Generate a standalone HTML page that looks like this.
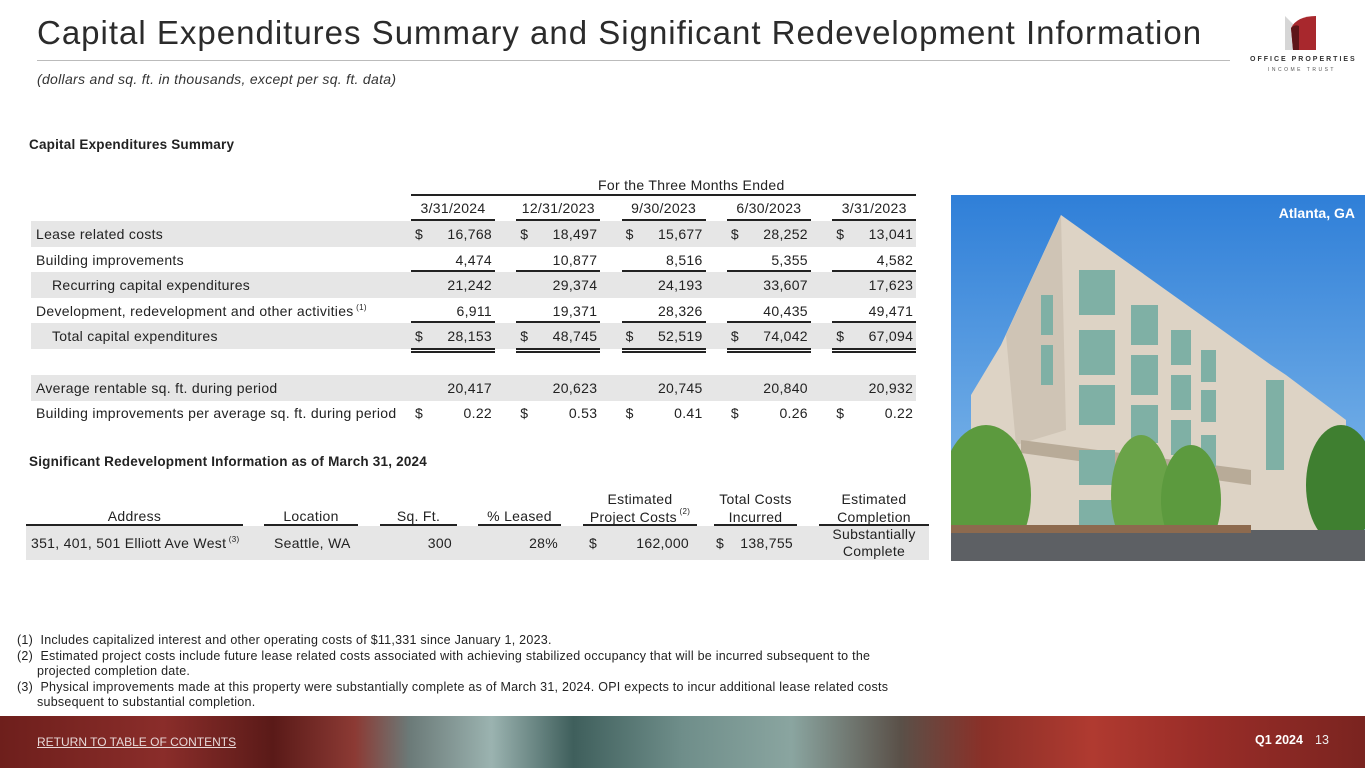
<!DOCTYPE html>
<html><head><meta charset="utf-8"><style>
*{margin:0;padding:0;box-sizing:border-box}
body{width:1365px;height:768px;overflow:hidden;background:#fff;font-family:"Liberation Sans",sans-serif;color:#222;position:relative;font-size:13px}
.a{position:absolute;white-space:nowrap}
.r{text-align:right}
.g{position:absolute;background:#e6e6e6}
.l{position:absolute;height:1.5px;background:#222}
sup{font-size:8px;vertical-align:6px}
.t{font-size:14px;letter-spacing:0.3px}
</style></head><body>
<div class="a" style="left:37px;top:14px;font-size:33px;color:#2b2b2b;letter-spacing:1px">Capital Expenditures Summary and Significant Redevelopment Information</div>
<div class="a" style="left:37px;top:60px;width:1193px;height:1px;background:#bbb"></div>
<div class="a" style="left:37px;top:71px;font-size:14px;font-style:italic;color:#333;letter-spacing:0.3px">(dollars and sq. ft. in thousands, except per sq. ft. data)</div>
<!-- logo -->
<svg class="a" style="left:1283px;top:14px" width="34" height="36" viewBox="0 0 34 36"><path d="M2 2 L14 14 L14 36 L2 36Z" fill="#d6d6d6"/><path d="M8 14 Q14 2 33 2 L33 36 L10 36Z" fill="#a8282d"/><path d="M8 14 Q12 10 16 12 L16 36 L10 36Z" fill="#5e1518"/></svg>
<div class="a" style="left:1250px;top:56px;font-size:7px;letter-spacing:2px;font-weight:bold;color:#333">OFFICE PROPERTIES</div>
<div class="a" style="left:1268px;top:67px;font-size:5px;letter-spacing:2.5px;color:#555">INCOME TRUST</div>

<div class="a" style="left:29px;top:137px;font-weight:bold;font-size:13.5px;letter-spacing:0.2px">Capital Expenditures Summary</div>
<div class="a t" style="left:598px;top:177px">For the Three Months Ended</div>
<div class="l" style="left:411px;top:194px;width:505px"></div>

<div class="g" style="left:31px;top:221px;width:885px;height:26px"></div>
<div class="g" style="left:31px;top:272px;width:885px;height:26px"></div>
<div class="g" style="left:31px;top:323px;width:885px;height:26px"></div>
<div class="g" style="left:31px;top:375px;width:885px;height:26px"></div>

<div style="position:absolute;left:0;top:0" class="t">
<div class="a" style="left:36px;top:226px">Lease related costs</div>
<div class="a" style="left:36px;top:252px">Building improvements</div>
<div class="a" style="left:52px;top:277px">Recurring capital expenditures</div>
<div class="a" style="left:36px;top:303px">Development, redevelopment and other activities<sup> (1)</sup></div>
<div class="a" style="left:52px;top:328px">Total capital expenditures</div>
<div class="a" style="left:36px;top:380px">Average rentable sq. ft. during period</div>
<div class="a" style="left:36px;top:405px">Building improvements per average sq. ft. during period</div>
</div>

<div id="cols"></div>
<script>
var cols=[["3/31/2024","16,768","4,474","21,242","6,911","28,153","20,417","0.22"],
["12/31/2023","18,497","10,877","29,374","19,371","48,745","20,623","0.53"],
["9/30/2023","15,677","8,516","24,193","28,326","52,519","20,745","0.41"],
["6/30/2023","28,252","5,355","33,607","40,435","74,042","20,840","0.26"],
["3/31/2023","13,041","4,582","17,623","49,471","67,094","20,932","0.22"]];
var tops=[226,252,277,303,328,380,405],dol=[1,0,0,0,1,0,1],h="";
cols.forEach(function(c,i){var x=411+i*105.3;
h+='<div class="a t" style="left:'+x+'px;top:200px;width:84px;text-align:center">'+c[0]+'</div>';
h+='<div class="l" style="left:'+x+'px;top:219px;width:84px"></div>';
h+='<div class="l" style="left:'+x+'px;top:270px;width:84px"></div>';
h+='<div class="l" style="left:'+x+'px;top:321px;width:84px"></div>';
h+='<div class="l" style="left:'+x+'px;top:348px;width:84px"></div>';
h+='<div class="l" style="left:'+x+'px;top:351px;width:84px"></div>';
for(var k=0;k<7;k++){
if(dol[k])h+='<div class="a t" style="left:'+(x+4)+'px;top:'+tops[k]+'px">$</div>';
h+='<div class="a r t" style="left:'+x+'px;top:'+tops[k]+'px;width:81px">'+c[k+1]+'</div>';}
});
document.getElementById("cols").innerHTML=h;
</script>

<div class="a" style="left:29px;top:454px;font-weight:bold;font-size:13.5px;letter-spacing:0.2px">Significant Redevelopment Information as of March 31, 2024</div>
<div style="position:absolute;left:0;top:0" class="t">
<div class="a" style="left:26px;top:508px;width:217px;text-align:center">Address</div>
<div class="a" style="left:264px;top:508px;width:94px;text-align:center">Location</div>
<div class="a" style="left:380px;top:508px;width:77px;text-align:center">Sq. Ft.</div>
<div class="a" style="left:478px;top:508px;width:83px;text-align:center">% Leased</div>
<div class="a" style="left:583px;top:490px;width:114px;text-align:center;line-height:18px">Estimated<br>Project Costs<sup style="vertical-align:top;line-height:8px"> (2)</sup></div>
<div class="a" style="left:714px;top:490px;width:83px;text-align:center;line-height:18px">Total Costs<br>Incurred</div>
<div class="a" style="left:819px;top:490px;width:110px;text-align:center;line-height:18px">Estimated<br>Completion</div>
<div class="l" style="left:26px;top:524px;width:217px"></div>
<div class="l" style="left:264px;top:524px;width:94px"></div>
<div class="l" style="left:380px;top:524px;width:77px"></div>
<div class="l" style="left:478px;top:524px;width:83px"></div>
<div class="l" style="left:583px;top:524px;width:114px"></div>
<div class="l" style="left:714px;top:524px;width:83px"></div>
<div class="l" style="left:819px;top:524px;width:110px"></div>
<div class="g" style="left:26px;top:526px;width:903px;height:34px"></div>
<div class="a" style="left:31px;top:535px">351, 401, 501 Elliott Ave West<sup> (3)</sup></div>
<div class="a" style="left:274px;top:535px">Seattle, WA</div>
<div class="a r" style="left:380px;top:535px;width:72px">300</div>
<div class="a r" style="left:478px;top:535px;width:80px">28%</div>
<div class="a" style="left:589px;top:535px">$</div>
<div class="a r" style="left:583px;top:535px;width:106px">162,000</div>
<div class="a" style="left:716px;top:535px">$</div>
<div class="a r" style="left:714px;top:535px;width:79px">138,755</div>
<div class="a" style="left:819px;top:526px;width:110px;text-align:center;line-height:17px">Substantially<br>Complete</div>
</div>

<!-- photo -->
<svg class="a" style="left:951px;top:195px" width="414" height="366" viewBox="0 0 414 366">
<defs><linearGradient id="sky" x1="0" y1="0" x2="0" y2="1"><stop offset="0" stop-color="#2f7fd8"/><stop offset="1" stop-color="#8cc0ec"/></linearGradient></defs>
<rect width="414" height="366" fill="url(#sky)"/>
<polygon points="20,200 50,150 110,20 320,170 335,180 395,225 395,340 20,340" fill="#ddd3c5"/>
<polygon points="55,140 110,20 115,235 65,250" fill="#cfc4b5"/>
<polygon points="70,245 300,275 300,290 70,258" fill="#b8ab98"/>
<g fill="#7fb0a5">
<rect x="128" y="75" width="36" height="45"/><rect x="180" y="110" width="27" height="40"/><rect x="220" y="135" width="20" height="35"/><rect x="250" y="155" width="15" height="32"/>
<rect x="128" y="135" width="36" height="45"/><rect x="180" y="160" width="27" height="40"/><rect x="220" y="180" width="20" height="35"/><rect x="250" y="195" width="15" height="32"/>
<rect x="128" y="190" width="36" height="40"/><rect x="180" y="210" width="27" height="38"/><rect x="220" y="225" width="20" height="35"/><rect x="250" y="240" width="15" height="32"/>
<rect x="315" y="185" width="18" height="90"/><rect x="90" y="100" width="12" height="40"/><rect x="90" y="150" width="12" height="40"/>
<rect x="128" y="255" width="36" height="35"/><rect x="128" y="305" width="36" height="30"/>
</g>
<ellipse cx="35" cy="300" rx="45" ry="70" fill="#5c9a3e"/>
<ellipse cx="190" cy="300" rx="30" ry="60" fill="#6aa348"/>
<ellipse cx="240" cy="305" rx="30" ry="55" fill="#5c9a3e"/>
<ellipse cx="390" cy="290" rx="35" ry="60" fill="#3f7f30"/>
<rect x="0" y="335" width="414" height="31" fill="#5d6064"/>
<rect x="0" y="330" width="300" height="8" fill="#8d6a4e"/>
<text x="404" y="23" text-anchor="end" fill="#fff" font-family="Liberation Sans" font-weight="bold" font-size="14">Atlanta, GA</text>
</svg>

<div style="position:absolute;left:17px;top:633px;font-size:12.5px;line-height:15.5px;color:#222;letter-spacing:0.25px">
<div>(1)&nbsp; Includes capitalized interest and other operating costs of $11,331 since January 1, 2023.</div>
<div>(2)&nbsp; Estimated project costs include future lease related costs associated with achieving stabilized occupancy that will be incurred subsequent to the</div>
<div style="padding-left:20px">projected completion date.</div>
<div>(3)&nbsp; Physical improvements made at this property were substantially complete as of March 31, 2024. OPI expects to incur additional lease related costs</div>
<div style="padding-left:20px">subsequent to substantial completion.</div>
</div>

<!-- footer -->
<div class="a" style="left:0;top:716px;width:1365px;height:52px;background:linear-gradient(90deg,#6e1f1c 0%,#8a2d2a 12%,#5a1a18 20%,#8c3a34 26%,#6b7a78 30%,#9bb3b0 36%,#3f5f5c 42%,#6f8e8a 50%,#8aa5a0 58%,#5a5048 66%,#8a3028 72%,#b03a30 80%,#9a2d28 88%,#7a2420 100%)"></div>
<div class="a" style="left:37px;top:735px;font-size:12px;color:#e8d8d8;text-decoration:underline">RETURN TO TABLE OF CONTENTS</div>
<div class="a" style="left:1255px;top:733px;font-size:12.5px;color:#fff;font-weight:bold">Q1 2024</div>
<div class="a" style="left:1315px;top:733px;font-size:12.5px;color:#eee">13</div>
</body></html>
